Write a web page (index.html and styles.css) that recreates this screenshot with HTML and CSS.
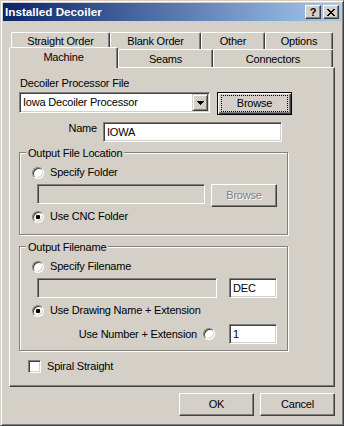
FILE: index.html
```html
<!doctype html>
<html lang="en">
<head>
    <meta charset="UTF-8">
    <title>Installed Decoiler</title>
    <link rel="stylesheet" href="styles.css">
</head>
<body>
    <div class="window">
        <div class="caption">
            <span class="caption-text">Installed Decoiler</span>
            <span class="cap-btn help">?</span>
            <span class="cap-btn close">
                <svg width="8" height="7" viewBox="0 0 8 7" shape-rendering="crispEdges">
                    <path d="M0 0h2v1H0zM6 0h2v1H6zM1 1h2v1H1zM5 1h2v1H5zM2 2h4v1H2zM3 3h2v1H3zM2 4h4v1H2zM1 5h2v1H1zM5 5h2v1H5zM0 6h2v1H0zM6 6h2v1H6z" fill="#000"/>
                </svg>
            </span>
        </div>

        <div class="client">
            <!-- back row of tabs -->
            <div class="tab-row back">
                <div class="tab t-straight">Straight Order</div>
                <div class="tab t-blank">Blank Order</div>
                <div class="tab t-other">Other</div>
                <div class="tab t-options">Options</div>
            </div>
            <!-- front row, Machine is the open tab -->
            <div class="tab-row front">
                <div class="tab t-machine selected">Machine</div>
                <div class="tab t-seams">Seams</div>
                <div class="tab t-conn">Connectors</div>
            </div>

            <div class="panel">
                <div class="file-label">Decoiler Processor File</div>
                <div class="row combo-row">
                    <div class="combo">
                        <span class="combo-text">Iowa Decoiler Processor</span>
                        <span class="drop">
                            <svg width="7" height="4" viewBox="0 0 7 4" shape-rendering="crispEdges">
                                <path d="M0 0h7v1H0zM1 1h5v1H1zM2 2h3v1H2zM3 3h1v1H3z" fill="#000"/>
                            </svg>
                        </span>
                    </div>
                    <div class="btn default"><span class="focus">Browse</span></div>
                </div>
                <div class="row name-row">
                    <span class="name-label">Name</span>
                    <div class="edit name-edit">IOWA</div>
                </div>

                <div class="group g-location">
                    <div class="legend">Output File Location</div>
                    <div class="radio-row first"><span class="radio"></span>Specify Folder</div>
                    <div class="row field-row">
                        <div class="edit off folder-edit"></div>
                        <div class="btn off browse-off">Browse</div>
                    </div>
                    <div class="radio-row"><span class="radio on"></span>Use CNC Folder</div>
                </div>

                <div class="group g-filename">
                    <div class="legend">Output Filename</div>
                    <div class="radio-row first"><span class="radio"></span>Specify Filename</div>
                    <div class="row field-row">
                        <div class="edit off file-edit"></div>
                        <div class="edit ext-edit">DEC</div>
                    </div>
                    <div class="radio-row"><span class="radio on"></span>Use Drawing Name + Extension</div>
                    <div class="row number-row">
                        <span class="number-label">Use Number + Extension</span>
                        <span class="radio"></span>
                        <div class="edit ext-edit">1</div>
                    </div>
                </div>

                <div class="check-row"><span class="check"></span>Spiral Straight</div>
            </div>

            <div class="actions">
                <div class="btn">OK</div>
                <div class="btn">Cancel</div>
            </div>
        </div>
    </div>
</body>
</html>
```

FILE: styles.css
```css
* {
    margin: 0;
    padding: 0;
    box-sizing: border-box;
}
body {
    font: 11px/13px "Liberation Sans", Arial, sans-serif;
    letter-spacing: -0.2px;
    color: #000;
    background: #d4d0c8;
}
.window {
    width: 344px;
    height: 426px;
    padding: 2px;
    border: 1px solid;
    border-color: #d4d0c8 #404040 #404040 #d4d0c8;
    box-shadow: inset 1px 1px #fff, inset -1px -1px #808080;
    background: #d4d0c8;
}

/* title bar */
.caption {
    display: flex;
    align-items: center;
    height: 18px;
    padding: 0 2px;
    background: linear-gradient(to right, #0a246a, #a6caf0);
}
.caption-text {
    flex: 1;
    color: #fff;
    font: bold 11.7px/18px "Liberation Sans", Arial, sans-serif;
    letter-spacing: 0;
}
.cap-btn {
    display: flex;
    align-items: center;
    justify-content: center;
    width: 16px;
    height: 14px;
    border: 1px solid;
    border-color: #fff #404040 #404040 #fff;
    box-shadow: inset -1px -1px #808080;
    background: #d4d0c8;
    font: bold 11px/12px "Liberation Sans", Arial, sans-serif;
    letter-spacing: 0;
}
.help {
    margin-right: 2px;
}

.client {
    padding: 11px 6px 0;
}

/* tabs */
.tab-row {
    display: flex;
    align-items: flex-start;
    padding-left: 2px;
}
.back {
    height: 17px;
}
.front {
    height: 18px;
}
.tab {
    height: 100%;
    border: 1px solid;
    border-bottom: 0;
    border-color: #fff #404040 #fff #fff;
    border-radius: 2px 2px 0 0;
    box-shadow: inset -1px 0 #808080;
    background: #d4d0c8;
    text-align: center;
    padding-top: 2px;
}
.front .tab {
    padding-top: 3px;
}
.t-straight { width: 99px; }
.t-blank { width: 91px; }
.t-other { width: 64px; }
.t-options { width: 68px; }
.t-machine { width: 109px; }
.t-seams { width: 95px; }
.t-conn { width: 120px; }
.tab.selected {
    position: relative;
    z-index: 1;
    height: 21px;
    margin: -2px 0 0 -2px;
}

.panel {
    height: 320px;
    padding: 9px 0 0 9px;
    border: 1px solid;
    border-color: #fff #404040 #404040 #fff;
    box-shadow: inset -1px -1px #808080;
}
.file-label {
    margin-left: 1px;
}
.row {
    display: flex;
    align-items: flex-start;
}
.combo-row {
    margin-top: 2px;
    height: 23px;
}

/* sunken fields */
.combo,
.edit,
.check {
    border: 1px solid;
    border-color: #808080 #fff #fff #808080;
    box-shadow: inset 1px 1px #404040, inset -1px -1px #d4d0c8;
    background: #fff;
}
.combo {
    display: flex;
    width: 191px;
    height: 21px;
    padding: 1px;
}
.combo-text {
    flex: 1;
    padding-left: 2px;
    line-height: 17px;
}
.drop {
    display: flex;
    align-items: center;
    justify-content: center;
    width: 16px;
    height: 17px;
    border: 1px solid;
    border-color: #d4d0c8 #404040 #404040 #d4d0c8;
    box-shadow: inset 1px 1px #fff, inset -1px -1px #808080;
    background: #d4d0c8;
}
.edit {
    height: 20px;
    padding: 0 3px;
    line-height: 18px;
}
.edit.off {
    background: #d4d0c8;
}

/* push buttons */
.btn {
    width: 75px;
    height: 23px;
    border: 1px solid;
    border-color: #fff #404040 #404040 #fff;
    box-shadow: inset -1px -1px #808080;
    background: #d4d0c8;
    text-align: center;
    line-height: 21px;
}
.btn.default {
    margin-left: 7px;
    padding: 2px 3px 2px 3px;
    border-color: #000;
    box-shadow: inset 1px 1px #fff, inset -1px -1px #404040, inset -2px -2px #808080;
}
.focus {
    display: block;
    height: 100%;
    border: 1px dotted #000;
    line-height: 15px;
}
.btn.off {
    color: #808080;
    text-shadow: 1px 1px #fff;
}

.name-row {
    margin-top: 7px;
    height: 20px;
}
.name-label {
    width: 78px;
    text-align: right;
}
.name-edit {
    width: 179px;
    margin-left: 6px;
}

/* group boxes */
.group {
    width: 269px;
    padding-left: 12px;
    border: 1px solid #808080;
    box-shadow: inset 1px 1px #fff, 1px 1px #fff;
}
.g-location {
    margin-top: 10px;
    height: 83px;
}
.g-filename {
    margin-top: 11px;
    height: 105px;
}
.legend {
    width: fit-content;
    margin: -6px 0 0 -6px;
    padding: 0 2px;
    background: #d4d0c8;
}
.radio-row {
    display: flex;
    align-items: center;
    height: 13px;
    margin-top: 3px;
}
.radio-row.first {
    margin-top: 6px;
}
.radio {
    width: 12px;
    height: 12px;
    margin-right: 6px;
    border: 1px solid;
    border-color: #808080 #fff #fff #808080;
    border-radius: 50%;
    box-shadow: inset 1px 1px #404040, inset -1px -1px #d4d0c8;
    background: #fff;
}
.radio.on {
    background: radial-gradient(circle, #000 0 2px, #fff 2.6px);
}
.field-row {
    margin-top: 5px;
    height: 23px;
}
.folder-edit {
    width: 168px;
    margin-left: 5px;
}
.browse-off {
    width: 66px;
    margin-left: 6px;
}
.file-edit {
    width: 180px;
    margin-left: 5px;
}
.ext-edit {
    width: 48px;
    margin-left: 12px;
}
.number-row {
    align-items: center;
    height: 20px;
    margin-top: 7px;
}
.number-label {
    width: 165px;
    text-align: right;
}
.number-row .radio {
    margin: 0 0 0 6px;
}
.number-row .ext-edit {
    margin-left: 14px;
}

.check-row {
    display: flex;
    align-items: center;
    height: 13px;
    margin: 9px 0 0 9px;
}
.check {
    width: 13px;
    height: 13px;
    margin-right: 6px;
}

.actions {
    display: flex;
    justify-content: flex-end;
    gap: 6px;
    margin-top: 6px;
}
```
